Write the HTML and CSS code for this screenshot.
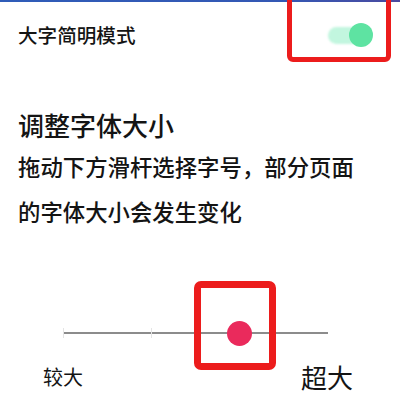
FILE: index.html
```html
<!DOCTYPE html>
<html lang="zh">
<head>
<meta charset="utf-8">
<link rel="stylesheet" href="styles.css">
</head>
<body>
<div class="topbar"></div>
<div class="row">
  <span class="row-label">大字简明模式</span>
  <div class="toggle">
    <div class="track"></div>
    <div class="knob"></div>
  </div>
  <div class="mark mark-toggle"></div>
</div>
<h1 class="title">调整字体大小</h1>
<p class="desc">拖动下方滑杆选择字号，部分页面<br>的字体大小会发生变化</p>
<div class="slider">
  <div class="line"></div>
  <div class="tick t1"></div>
  <div class="tick t2"></div>
  <div class="sknob"></div>
  <div class="mark mark-slider"></div>
</div>
<div class="labels">
  <span class="lab-small">较大</span>
  <span class="lab-big">超大</span>
</div>
</body>
</html>
```
FILE: styles.css
```css
html, body {
  margin: 0;
  padding: 0;
  background: #ffffff;
  width: 400px;
  height: 404px;
  overflow: hidden;
  font-family: "Noto Sans CJK SC", "Noto Sans", sans-serif;
  color: #141414;
}
.topbar {
  height: 2px;
  background: linear-gradient(90deg, #2f5cb8 0%, #3458b4 70%, #4a4aa0 100%);
}
.row {
  position: relative;
  height: 66px;
  display: flex;
  align-items: center;
  justify-content: space-between;
  padding: 0 27px 0 18px;
}
.row-label {
  font-size: 19.6px;
  line-height: 26px;
  font-weight: 500;
}
.toggle {
  position: relative;
  width: 45px;
  height: 24px;
}
.track {
  position: absolute;
  left: 0;
  top: 4px;
  width: 34px;
  height: 17px;
  border-radius: 9px;
  background: #c2f6df;
  filter: blur(1px);
}
.knob {
  position: absolute;
  right: 0;
  top: 0;
  width: 24px;
  height: 24px;
  border-radius: 50%;
  background: #5ee3a2;
}
.mark {
  position: absolute;
  border-style: solid;
  border-color: #ec1c1c;
  box-sizing: border-box;
}
.mark-toggle {
  left: 287px;
  top: -8px;
  width: 104px;
  height: 68px;
  border-width: 5px;
  border-radius: 6px;
}
.title {
  margin: 39px 0 0 18px;
  font-size: 26px;
  line-height: 36px;
  font-weight: 500;
}
.desc {
  margin: 1px 0 0 18px;
  font-size: 22.4px;
  line-height: 45px;
  font-weight: 500;
}
.slider {
  position: relative;
  margin: 79px 0 0 63px;
  width: 265px;
  height: 40px;
}
.line {
  position: absolute;
  left: 0;
  right: 0;
  top: 19px;
  height: 2px;
  background: #8c8c8c;
}
.tick {
  position: absolute;
  top: 15px;
  width: 1px;
  height: 10px;
  background: #e4e4e4;
}
.t1 { left: 0; }
.t2 { left: 88px; }
.sknob {
  position: absolute;
  left: 164px;
  top: 8px;
  width: 25px;
  height: 25px;
  border-radius: 50%;
  background: #ea2a5c;
}
.mark-slider {
  left: 131px;
  top: -32px;
  width: 82px;
  height: 89px;
  border-width: 7px;
  border-radius: 7px;
}
.labels {
  display: flex;
  justify-content: space-between;
  align-items: center;
  margin: 8px 0 0 43px;
  width: 311px;
  height: 30px;
}
.lab-small {
  font-size: 20px;
  font-weight: 400;
}
.lab-big {
  font-size: 26px;
  font-weight: 400;
  margin-right: 1px;
}
```
